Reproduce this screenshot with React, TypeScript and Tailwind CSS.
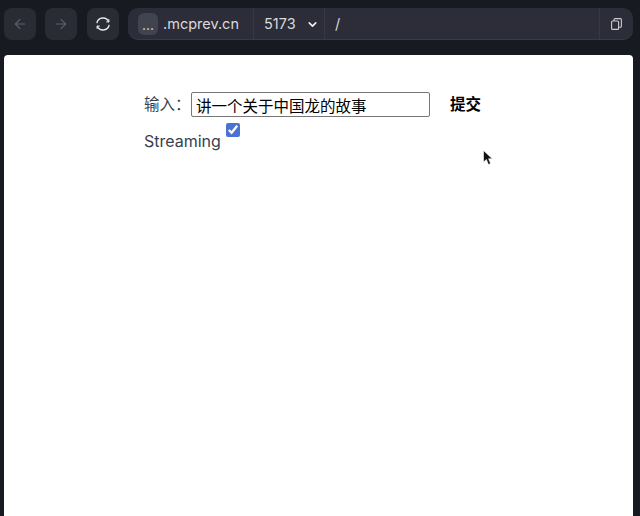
import { ArrowLeft, ArrowRight, ChevronDown } from "lucide-react"

const sans = "font-['Inter','Noto_Sans_CJK_SC',sans-serif]"

function NavButton({ children, className }: { children: React.ReactNode; className: string }) {
  return (
    <div className={`flex h-8 w-8 items-center justify-center rounded-lg bg-[#2a2c35] ${className}`}>
      {children}
    </div>
  )
}

function ReloadIcon() {
  return (
    <svg width="16" height="16" viewBox="0 0 16 16" fill="none" stroke="#e8e8ea" strokeWidth="1.4" strokeLinecap="round">
      <path d="M2 6.5A6.2 6.2 0 0 1 13.6 5.6" />
      <path d="M14 9.5A6.2 6.2 0 0 1 2.4 10.4" />
      <path d="M13.9 3.5v2.4h-2.3" strokeWidth="1" />
      <path d="M2.1 12.5v-2.4h2.3" strokeWidth="1" />
    </svg>
  )
}

function CopyIcon() {
  return (
    <svg width="11" height="12" viewBox="0 0 11 12" fill="none" stroke="#c9cacd" strokeWidth="1.1">
      <rect x="0.6" y="3" width="7" height="8.4" rx="1" />
      <path d="M3 3V1.6a1 1 0 0 1 1-1h5.4a1 1 0 0 1 1 1v6.6a1 1 0 0 1-1 1H7.6" />
    </svg>
  )
}

export default function App() {
  return (
    <div className={`flex h-[516px] w-[640px] flex-col overflow-hidden bg-[#181a22] ${sans}`}>
      <header className="flex h-[55px] shrink-0 items-start pl-1 pr-[7px] pt-2">
        <NavButton className="mr-[9px]">
          <ArrowLeft size={16} color="#5d6068" strokeWidth={1.6} />
        </NavButton>
        <NavButton className="mr-[10px]">
          <ArrowRight size={16} color="#5d6068" strokeWidth={1.6} />
        </NavButton>
        <NavButton className="mr-[9px]">
          <ReloadIcon />
        </NavButton>

        <div className="flex h-8 flex-1 items-stretch rounded-[10px] border-b border-[#383a44] bg-[#2c2d38] text-[#d9dade]">
          <div className="flex w-[126px] items-center border-r border-[#363843] pl-[10px]">
            <div className="flex h-[22px] w-5 items-end justify-center rounded-md bg-[#41434e] pb-[3px] text-[14px] leading-none">
              ...
            </div>
            <span className="ml-[5px] whitespace-nowrap text-[14.5px]">.mcprev.cn</span>
          </div>
          <div className="flex w-[71px] items-center border-r border-[#363843] pl-[10px]">
            <span className="text-[14.5px]">5173</span>
            <ChevronDown size={13} color="#f0f0f2" strokeWidth={3} className="ml-[10px] mt-[2px]" />
          </div>
          <div className="flex flex-1 items-center border-r border-[#363843] pl-[10px] text-[14.5px]">/</div>
          <div className="flex w-[33px] items-center justify-center">
            <CopyIcon />
          </div>
        </div>
      </header>

      <main className="ml-1 mr-[7px] flex-1 rounded-t-[4px] bg-white pl-[140px] pt-[37px]">
        <div className="flex h-[25px] items-center">
          <label className="w-[47px] whitespace-nowrap text-[15.5px] text-[#374151]">输入：</label>
          <input
            readOnly
            value="讲一个关于中国龙的故事"
            className={`h-[25px] w-[239px] rounded-[2px] border border-[#767676] bg-white px-1 text-[15.5px] text-black outline-none ${sans}`}
          />
          <button className="ml-5 text-[15.5px] font-semibold text-black">提交</button>
        </div>
        <div className="mt-[15px] flex h-[18px] items-start">
          <span className="mt-[-1px] text-[16px] leading-[20px] text-[#374151]">Streaming</span>
          <input
            type="checkbox"
            readOnly
            checked
            className="ml-[5px] mt-[-9px] h-[14px] w-[14px] accent-[#4a72d0]"
          />
        </div>
      </main>

      <svg className="absolute left-[483px] top-[150px]" width="11" height="16" viewBox="0 0 11 16">
        <path d="M0.5 0.5v11.5l2.9-2.5 2 5 2.2-.9-2-4.8h3.7z" fill="#111" stroke="#fff" strokeWidth="0.6" />
      </svg>
    </div>
  )
}
